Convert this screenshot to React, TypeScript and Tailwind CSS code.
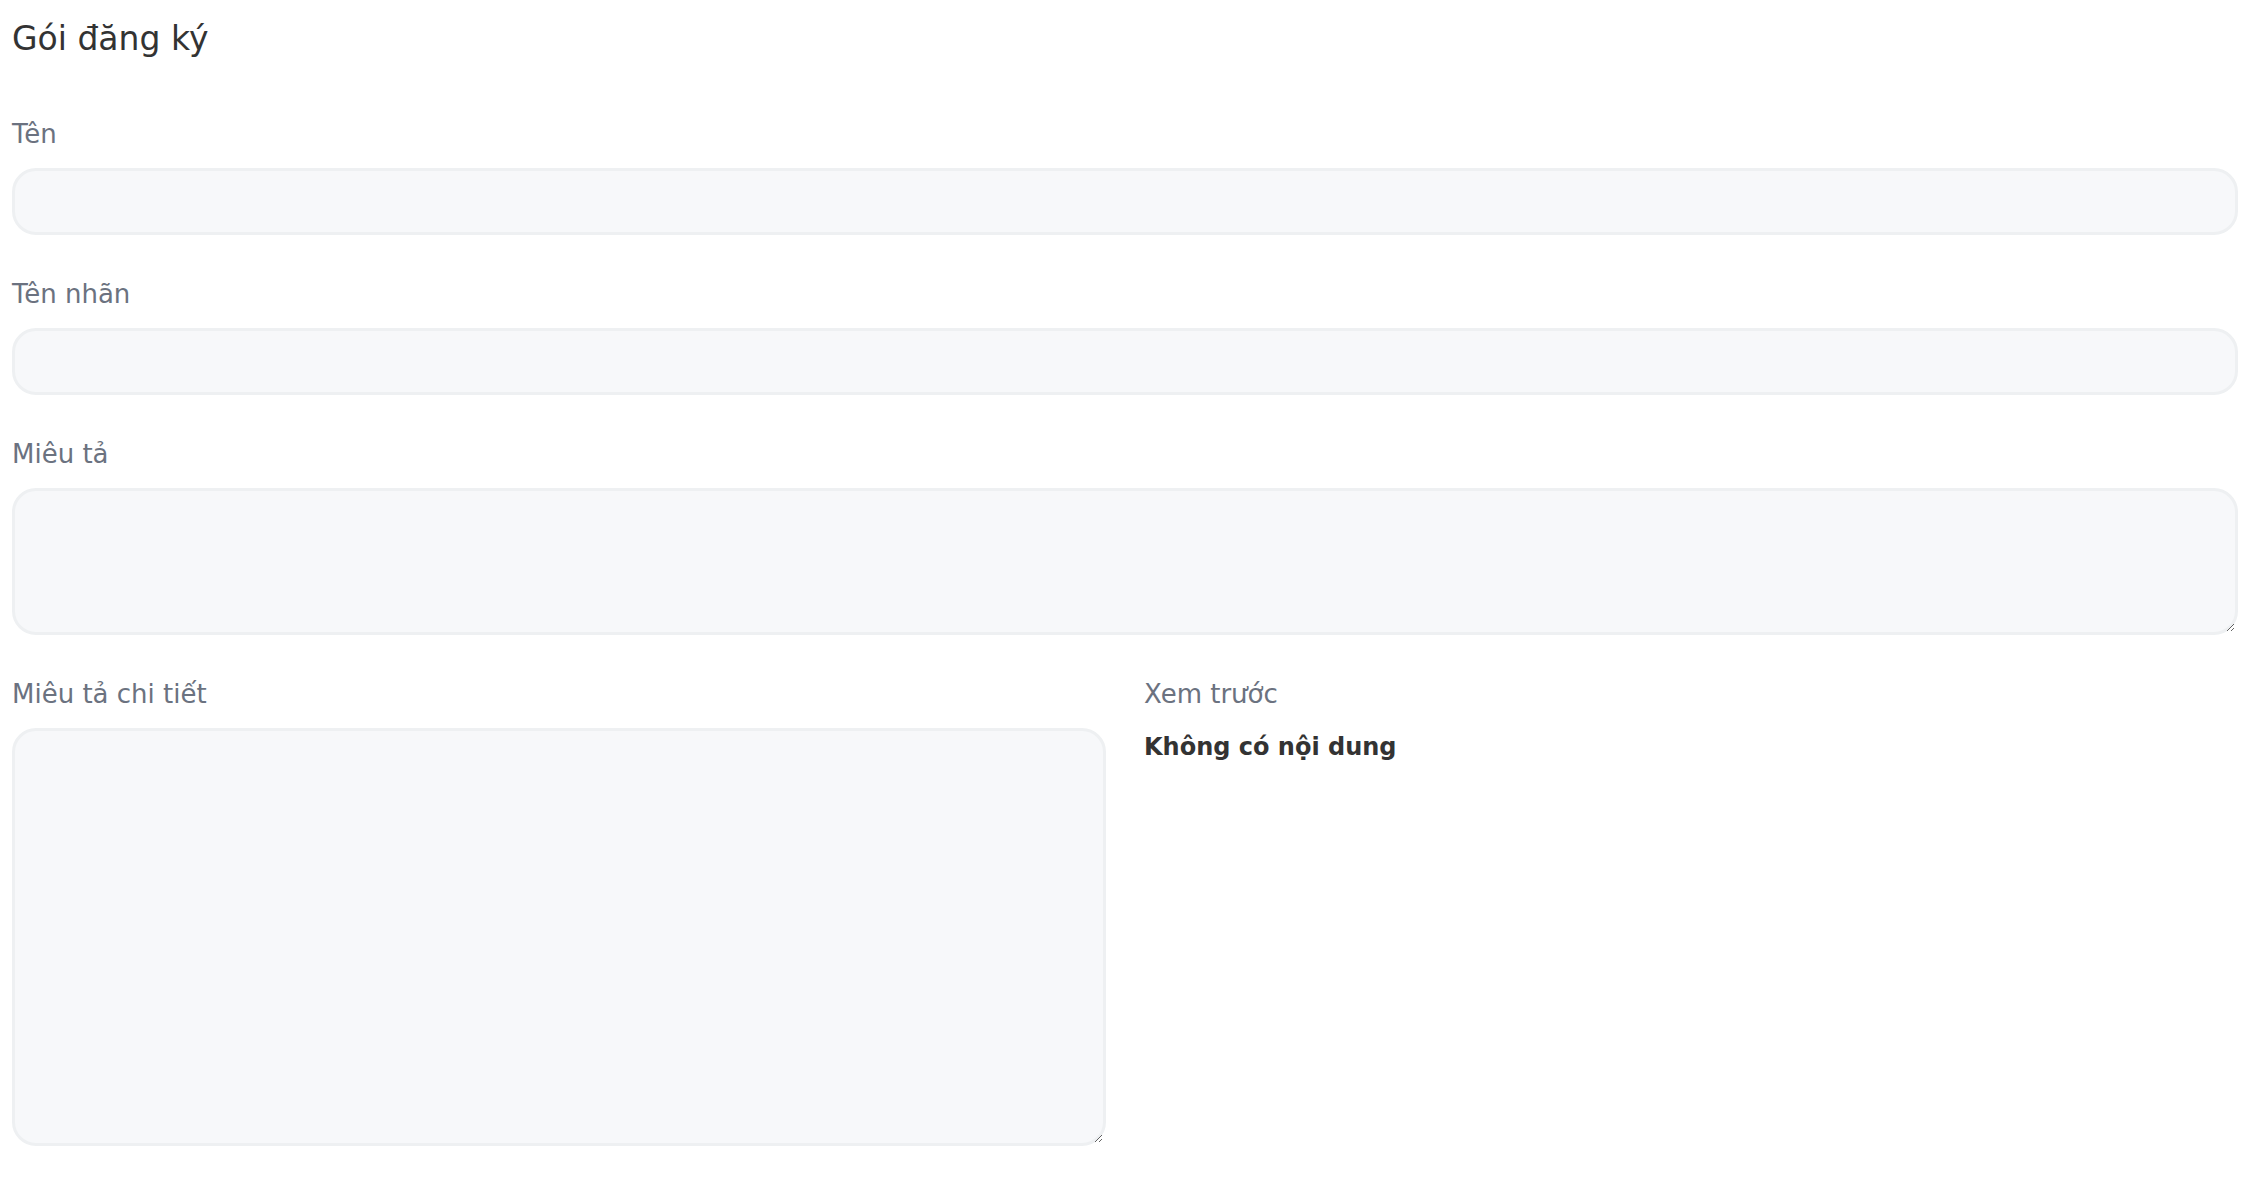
const fieldClass =
  "block w-full rounded-[24px] border-[3px] border-[#eef0f2] bg-[#f7f8fa] px-5 outline-none";

const labelClass = "block text-[26px] leading-[32px] text-[#6b7280] mb-[18px]";

const App = () => {
  return (
    <div
      className="min-h-screen bg-white pl-3 pr-[18px] pt-[19px] pb-10"
      style={{ fontFamily: '"DejaVu Sans", "Noto Sans", sans-serif' }}
    >
      <h1 className="text-[33px] leading-[40px] text-[#333333] font-normal">Gói đăng ký</h1>

      <div className="mt-[59px]">
        <label className={labelClass}>Tên</label>
        <input type="text" className={`${fieldClass} h-[67px]`} />
      </div>

      <div className="mt-[43px]">
        <label className={labelClass}>Tên nhãn</label>
        <input type="text" className={`${fieldClass} h-[67px]`} />
      </div>

      <div className="mt-[43px]">
        <label className={labelClass}>Miêu tả</label>
        <textarea className={`${fieldClass} h-[147px] py-3`} />
      </div>

      <div className="mt-[43px] grid grid-cols-2 gap-x-[38px]">
        <div>
          <label className={labelClass}>Miêu tả chi tiết</label>
          <textarea className={`${fieldClass} h-[418px] py-3`} />
        </div>
        <div>
          <label className={labelClass}>Xem trước</label>
          <div className="mt-[21px] text-[24px] leading-[32px] font-bold text-[#333333]">
            Không có nội dung
          </div>
        </div>
      </div>
    </div>
  );
};

export default App;
